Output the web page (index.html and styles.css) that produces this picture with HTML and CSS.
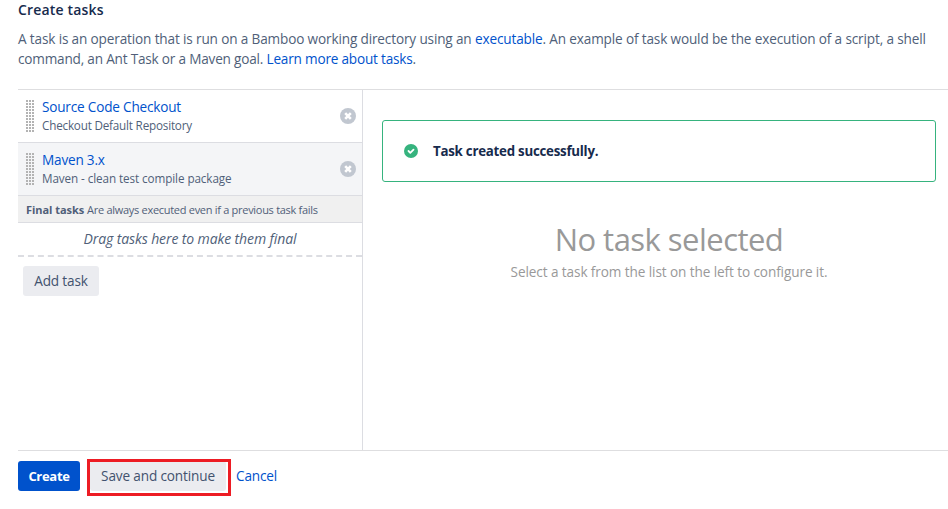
FILE: index.html
```html
<!DOCTYPE html>
<html lang="en">
<head><meta charset="utf-8"><title>Create tasks</title><link rel="stylesheet" href="styles.css"></head>
<body>
<main>
<header class="intro">
<h1>Create tasks</h1>
<p>A task is an operation that is run on a Bamboo working directory using an <a>executable</a>. An example of task would be the execution of a script, a shell<br><span class="second">command, an Ant Task or a Maven goal. <a>Learn more about tasks</a>.</span></p>
</header>
<section class="panel">
<aside>
<article class="task"><i class="grip"></i><div class="label"><a>Source Code Checkout</a><small>Checkout Default Repository</small></div><svg class="remove" viewBox="0 0 16 16"><circle cx="8" cy="8" r="8"/><path d="M5.2 5.2l5.6 5.6M10.8 5.2l-5.6 5.6"/></svg></article>
<article class="task selected"><i class="grip"></i><div class="label"><a>Maven 3.x</a><small>Maven - clean test compile package</small></div><svg class="remove" viewBox="0 0 16 16"><circle cx="8" cy="8" r="8"/><path d="M5.2 5.2l5.6 5.6M10.8 5.2l-5.6 5.6"/></svg></article>
<div class="final"><b>Final tasks</b><span>Are always executed even if a previous task fails</span></div>
<div class="drop">Drag tasks here to make them final</div>
<button class="add">Add task</button>
</aside>
<div class="detail">
<div class="message"><svg viewBox="0 0 14 14"><circle cx="7" cy="7" r="7"/><path d="M4.5 7l1.8 1.8 3.2-3.2"/></svg><b>Task created successfully.</b></div>
<div class="empty"><h2>No task selected</h2><p>Select a task from the list on the left to configure it.</p></div>
</div>
</section>
<footer><button class="primary">Create</button><div class="mark"><button class="save">Save and continue</button></div><a class="cancel">Cancel</a></footer>
</main>
</body>
</html>
```
FILE: styles.css
```css
*{box-sizing:border-box}
body{margin:0;background:#fff;color:#505f79;font:13.6px/20px "Open Sans","Noto Sans",sans-serif;letter-spacing:-.15px}
h1,h2,p{margin:0}
a{color:#0052cc}
main{height:509px;padding:0 0 0 18px}
.intro{height:89px;white-space:nowrap}
.second{letter-spacing:-.2px}
h1{font-size:14px;line-height:20px;font-weight:600;color:#172b4d;margin-bottom:9px;letter-spacing:.17px}
.panel{display:flex;height:362px;border-top:1px solid #dedee0;border-bottom:1px solid #dedee0}
aside{width:345px;flex:none;border-right:1px solid #dcdde2}
.task{display:flex;height:53px;border-bottom:1px solid #dcdde2;align-items:center;letter-spacing:-.2px}
.selected{background:#f4f5f7}
.selected small{letter-spacing:-.09px}
.label{flex:1;margin-left:8px;white-space:nowrap}
.label a,.label small{display:block}
small{font-size:11.7px;line-height:16px;padding-bottom:2px}
.grip{width:8px;height:32px;margin-left:8px;background:conic-gradient(from 0deg at 2px 2px,transparent 270deg,#b3b3b3 0) 0 0/3px 3px}
.remove{flex:none;width:16px;height:16px;margin-right:6px;fill:#c1c7d0}
.remove path{stroke:#fff;stroke-width:2.6}
.final{display:flex;gap:3px;height:27px;background:#f0f0f0;border-bottom:1px solid #dcdde2;padding:4px 8px;font-size:11px;letter-spacing:-.29px;white-space:nowrap}
.final b{letter-spacing:-.05px}
.drop{height:34px;border-bottom:2px dashed #dcdde2;text-align:center;font-size:14px;font-style:italic;letter-spacing:-.11px;line-height:32px}
button{border:0;border-radius:3px;background:#ebecf0;color:#42526e;font:inherit;letter-spacing:inherit;height:30px;padding:0;white-space:nowrap}
.add{width:76px;margin:9px 5px}
.detail{flex:1;padding:30px 12px 0 19px;text-align:center;color:#999}
.message{display:flex;align-items:center;gap:15px;height:62px;border:1px solid #36b37e;border-radius:3px;padding-left:21px;color:#172b4d;font-size:13.3px;letter-spacing:-.25px}
.message svg{width:14px;fill:#36b37e}
.message path{fill:none;stroke:#fff;stroke-width:1.8;stroke-linecap:round;stroke-linejoin:round}
.empty{padding:37px 0 0 20px;letter-spacing:-.1px}
h2{font-size:31px;line-height:40px;font-weight:400;letter-spacing:-.53px;margin-bottom:3px}
footer{display:flex;align-items:center;padding-top:10px}
.primary{width:62px;background:#0052cc;color:#fff;font-size:13px;font-weight:700;letter-spacing:-.3px}
.mark{position:relative;margin:0 10px}
.mark::after{content:"";position:absolute;left:-3px;right:-5px;top:-2px;bottom:-5px;border:3px solid #ed1c24}
.save{display:block;width:136px}
```
